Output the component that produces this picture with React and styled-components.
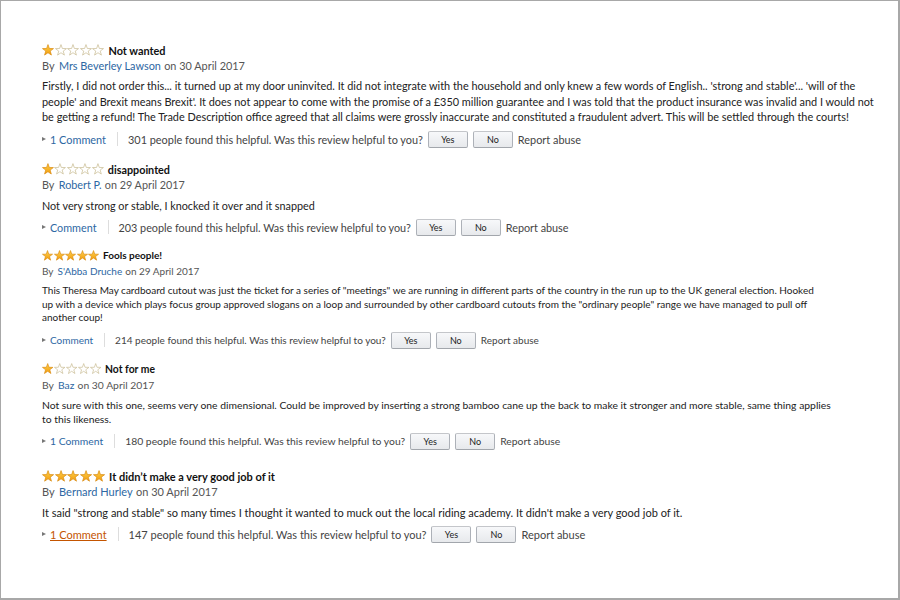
import React from "react";
import styled, { createGlobalStyle } from "styled-components";

const Global = createGlobalStyle`
  html, body { margin: 0; padding: 0; background: #fff; }
  body { font-family: Lato, "Liberation Sans", sans-serif; }
`;

const Page = styled.div`
  box-sizing: border-box;
  width: 900px;
  height: 600px;
  border: 1px solid #a8a8a8;
  border-right-width: 2px;
  border-bottom-width: 2px;
  padding: 41px 0 0 41px;
  background: #fff;
  color: #222;
  overflow: hidden;
`;

const Review = styled.div`
  margin-top: ${(p) => p.$mt || 0}px;
  display: flex;
  flex-direction: column;
  font-size: ${(p) => p.$fs}px;
`;

const Header = styled.div`
  display: flex;
  align-items: center;
  height: 16px;
  gap: 0.4em;
`;

const Stars = styled.div`
  display: flex;
  gap: 0.05em;
  & svg {
    width: 1.1em;
    height: 1.1em;
    display: block;
  }
`;

const Title = styled.span`
  font-weight: 700;
  color: #111;
`;

const Byline = styled.div`
  height: 16px;
  line-height: 16px;
  color: #555;
`;

const Author = styled.span`
  color: #2d67a3;
  margin: 0 0.3em 0 0.4em;
`;

const Body = styled.div`
  margin-top: ${(p) => 12 - p.$lh / 2}px;
  line-height: ${(p) => p.$lh}px;
  color: #222;
  white-space: nowrap;
`;

const Line = styled.div``;

const Footer = styled.div`
  margin-top: ${(p) => 13 - p.$lh / 2}px;
  height: 18px;
  display: flex;
  align-items: center;
  color: #444;
  white-space: nowrap;
`;

const Caret = styled.span`
  width: 0;
  height: 0;
  border-top: 2.5px solid transparent;
  border-bottom: 2.5px solid transparent;
  border-left: 4px solid #777;
  margin-right: 4px;
`;

const CommentLink = styled.a`
  color: ${(p) => (p.$active ? "#c45500" : "#2d67a3")};
  text-decoration: ${(p) => (p.$active ? "underline" : "none")};
  cursor: pointer;
`;

const Divider = styled.span`
  width: 1px;
  height: 14px;
  background: #ddd;
  margin: 0 10px 0 11px;
`;

const Helpful = styled.span`
  color: #444;
  margin-right: 5px;
`;

const Btn = styled.button`
  box-sizing: border-box;
  width: 40px;
  height: 17px;
  margin-right: 5px;
  padding: 0;
  border: 1px solid #adb1b8;
  border-color: #c4c6ca #adb1b8 #a2a6ac;
  border-radius: 2px;
  background: linear-gradient(to bottom, #f7f8fa, #e7e9ec);
  font-family: inherit;
  font-size: 9px;
  color: #222;
  line-height: 15px;
`;

const Report = styled.span`
  color: #444;
`;

const STAR = "6,0.6 7.38,4.5 11.52,4.61 8.24,7.13 9.41,11.09 6,8.75 2.59,11.09 3.76,7.13 0.48,4.61 4.62,4.5";

function Star({ filled, id }) {
  return (
    <svg viewBox="0 0 12 12">
      <defs>
        <linearGradient id={id} x1="0" y1="0" x2="0" y2="1">
          <stop offset="0" stopColor="#ffd24a" />
          <stop offset="1" stopColor="#f19b0e" />
        </linearGradient>
      </defs>
      <polygon
        points={STAR}
        fill={filled ? `url(#${id})` : "#fff"}
        stroke={filled ? "#d98a10" : "#c7b98e"}
        strokeWidth="0.7"
        strokeLinejoin="round"
      />
    </svg>
  );
}

function Rating({ n, k }) {
  return (
    <Stars>
      {[0, 1, 2, 3, 4].map((i) => (
        <Star key={i} filled={i < n} id={`g${k}${i}`} />
      ))}
    </Stars>
  );
}

const reviews = [
  {
    stars: 1,
    title: "Not wanted",
    author: "Mrs Beverley Lawson",
    date: "30 April 2017",
    fs: 10.9,
    lh: 15.5,
    mt: 0,
    lines: [
      "Firstly, I did not order this... it turned up at my door uninvited. It did not integrate with the household and only knew a few words of English.. 'strong and stable'... 'will of the",
      "people' and Brexit means Brexit'. It does not appear to come with the promise of a £350 million guarantee and I was told that the product insurance was invalid and I would not",
      "be getting a refund! The Trade Description office agreed that all claims were grossly inaccurate and constituted a fraudulent advert. This will be settled through the courts!",
    ],
    comment: "1 Comment",
    helpful: 301,
  },
  {
    stars: 1,
    title: "disappointed",
    author: "Robert P.",
    date: "29 April 2017",
    fs: 10.8,
    lh: 15,
    mt: 13,
    lines: ["Not very strong or stable, I knocked it over and it snapped"],
    comment: "Comment",
    helpful: 203,
  },
  {
    stars: 5,
    title: "Fools people!",
    author: "S'Abba Druche",
    date: "29 April 2017",
    fs: 10,
    lh: 13.5,
    mt: 11,
    lines: [
      "This Theresa May cardboard cutout was just the ticket for a series of \"meetings\" we are running in different parts of the country in the run up to the UK general election. Hooked",
      "up with a device which plays focus group approved slogans on a loop and surrounded by other cardboard cutouts from the \"ordinary people\" range we have managed to pull off",
      "another coup!",
    ],
    comment: "Comment",
    helpful: 214,
  },
  {
    stars: 1,
    title: "Not for me",
    author: "Baz",
    date: "30 April 2017",
    fs: 10.35,
    lh: 14,
    mt: 12,
    lines: [
      "Not sure with this one, seems very one dimensional. Could be improved by inserting a strong bamboo cane up the back to make it stronger and more stable, same thing applies",
      "to this likeness.",
    ],
    comment: "1 Comment",
    helpful: 180,
  },
  {
    stars: 5,
    title: "It didn\u2019t make a very good job of it",
    author: "Bernard Hurley",
    date: "30 April 2017",
    fs: 11,
    lh: 15,
    mt: 18,
    lines: [
      "It said \"strong and stable\" so many times I thought it wanted to muck out the local riding academy. It didn't make a very good job of it.",
    ],
    comment: "1 Comment",
    helpful: 147,
    active: true,
  },
];

export default function App() {
  return (
    <>
      <Global />
      <Page>
        {reviews.map((r, idx) => (
          <Review key={idx} $mt={r.mt} $fs={r.fs}>
            <Header>
              <Rating n={r.stars} k={idx} />
              <Title>{r.title}</Title>
            </Header>
            <Byline>
              By<Author>{r.author}</Author>on {r.date}
            </Byline>
            <Body $lh={r.lh}>
              {r.lines.map((l, i) => (
                <Line key={i}>{l}</Line>
              ))}
            </Body>
            <Footer $lh={r.lh}>
              <Caret />
              <CommentLink $active={r.active}>{r.comment}</CommentLink>
              <Divider />
              <Helpful>
                {r.helpful} people found this helpful. Was this review helpful to you?
              </Helpful>
              <Btn>Yes</Btn>
              <Btn>No</Btn>
              <Report>Report abuse</Report>
            </Footer>
          </Review>
        ))}
      </Page>
    </>
  );
}
